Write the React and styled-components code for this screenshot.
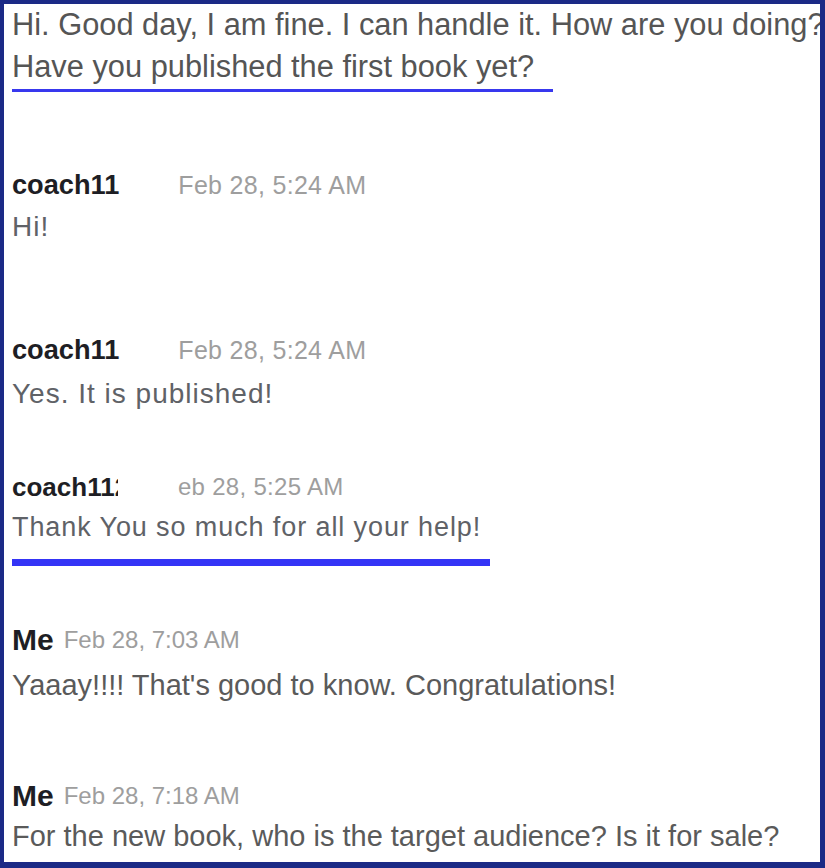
import React from "react";
import styled, { createGlobalStyle, css } from "styled-components";

const GlobalStyle = createGlobalStyle`
  html, body { margin: 0; padding: 0; background: #ffffff; }
  body { font-family: "Liberation Sans", Arial, sans-serif; }
`;

const Frame = styled.main`
  box-sizing: border-box;
  width: 825px;
  height: 868px;
  border-style: solid;
  border-color: #1b2a86;
  border-width: 4px 5px 6px 4px;
  padding: 0 0 0 8px;
  background: #ffffff;
  overflow: hidden;
  display: flex;
  flex-direction: column;
`;

const QuoteLine = styled.p`
  margin: 0;
  font-size: 30.8px;
  line-height: 42px;
  color: #555555;
  white-space: nowrap;
  overflow: hidden;
`;

const Rule = styled.div`
  flex: none;
  width: ${(p) => p.$w}px;
  height: ${(p) => p.$h}px;
  margin-top: ${(p) => p.$mt}px;
  background: ${(p) => p.$color};
`;

const Message = styled.section`
  margin-top: ${(p) => p.$mt}px;
  display: flex;
  flex-direction: column;
`;

const Header = styled.div`
  display: flex;
  align-items: center;
  gap: ${(p) => p.$gap}px;
  height: 34px;
  line-height: 34px;
  white-space: nowrap;
`;

const Name = styled.span`
  font-weight: 700;
  font-size: ${(p) => p.$size}px;
  color: #1e1e24;
  ${(p) =>
    p.$clip &&
    css`
      display: block;
      width: ${p.$clip}px;
      overflow: hidden;
    `}
`;

const StampClip = styled.span`
  display: block;
  overflow: hidden;
`;

const Stamp = styled.span`
  display: block;
  font-size: ${(p) => p.$size}px;
  letter-spacing: ${(p) => p.$ls || 0}px;
  color: #9e9e9e;
  margin-left: ${(p) => -(p.$shift || 0)}px;
`;

const Body = styled.p`
  margin: ${(p) => p.$mt}px 0 0;
  font-size: ${(p) => p.$size}px;
  letter-spacing: ${(p) => p.$ls || 0}px;
  line-height: 36px;
  color: ${(p) => p.$color};
  white-space: nowrap;
`;

const messages = [
  {
    mt: 76,
    name: "coach11",
    nameSize: 27.2,
    gap: 59,
    date: "Feb 28, 5:24 AM",
    dateSize: 25,
    dateLs: 0.3,
    bodyMt: 7,
    text: "Hi!",
    textSize: 28,
    textLs: 1,
    color: "#5f6267",
  },
  {
    mt: 88,
    name: "coach11",
    nameSize: 27.2,
    gap: 59,
    date: "Feb 28, 5:24 AM",
    dateSize: 25,
    dateLs: 0.3,
    bodyMt: 9,
    text: "Yes. It is published!",
    textSize: 28,
    textLs: 1,
    color: "#5f6267",
  },
  {
    mt: 58,
    name: "coach112",
    nameSize: 26,
    clip: 106,
    gap: 60,
    date: "Feb 28, 5:25 AM",
    dateSize: 24,
    dateLs: 0.3,
    shift: 15,
    bodyMt: 5,
    text: "Thank You so much for all your help!",
    textSize: 27,
    textLs: 0.9,
    color: "#5f6267",
    rule: { mt: 14, h: 7, w: 478, color: "#3434f6" },
  },
  {
    mt: 57,
    name: "Me",
    nameSize: 30,
    gap: 10,
    date: "Feb 28, 7:03 AM",
    dateSize: 24,
    bodyMt: 10,
    text: "Yaaay!!!! That's good to know. Congratulations!",
    textSize: 29,
    color: "#5a5a5a",
  },
  {
    mt: 76,
    name: "Me",
    nameSize: 30,
    gap: 10,
    date: "Feb 28, 7:18 AM",
    dateSize: 24,
    bodyMt: 5,
    text: "For the new book, who is the target audience? Is it for sale?",
    textSize: 29,
    color: "#5a5a5a",
  },
];

function ChatMessage({ m }) {
  return (
    <>
      <Message $mt={m.mt}>
        <Header $gap={m.gap}>
          <Name $size={m.nameSize} $clip={m.clip}>
            {m.name}
          </Name>
          <StampClip>
            <Stamp $size={m.dateSize} $ls={m.dateLs} $shift={m.shift}>
              {m.date}
            </Stamp>
          </StampClip>
        </Header>
        <Body $mt={m.bodyMt} $size={m.textSize} $ls={m.textLs} $color={m.color}>
          {m.text}
        </Body>
      </Message>
      {m.rule && (
        <Rule $mt={m.rule.mt} $h={m.rule.h} $w={m.rule.w} $color={m.rule.color} />
      )}
    </>
  );
}

export default function App() {
  return (
    <>
      <GlobalStyle />
      <Frame>
        <QuoteLine>Hi. Good day, I am fine. I can handle it. How are you doing?</QuoteLine>
        <QuoteLine>Have you published the first book yet?</QuoteLine>
        <Rule $mt={1} $h={3} $w={541} $color="#3838ee" />
        {messages.map((m, i) => (
          <ChatMessage key={i} m={m} />
        ))}
      </Frame>
    </>
  );
}
